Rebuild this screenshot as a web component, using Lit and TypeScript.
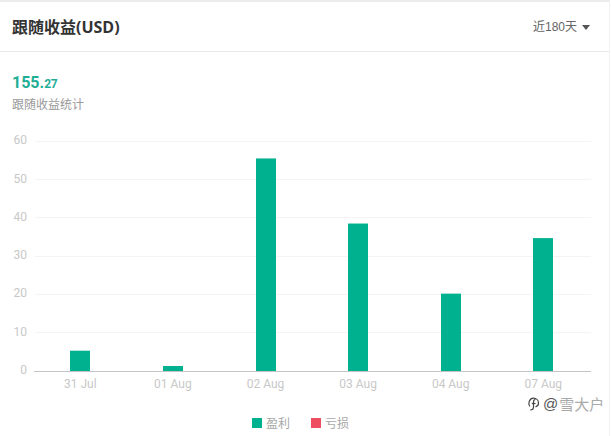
import { LitElement, html, css, svg } from "lit";
import { customElement } from "lit/decorators.js";

const Y0 = 371;
const STEP = 38.3;
const X0 = 34;
const BAND = 92.6;
const data = [
  { label: "31 Jul", v: 5.3 },
  { label: "01 Aug", v: 1.3 },
  { label: "02 Aug", v: 55.5 },
  { label: "03 Aug", v: 38.5 },
  { label: "04 Aug", v: 20.2 },
  { label: "07 Aug", v: 34.7 },
];

@customElement("app-root")
export class AppRoot extends LitElement {
  static styles = css`
    :host {
      display: block;
      width: 611px;
      height: 436px;
      background: #fff;
      overflow: hidden;
      position: relative;
      font-family: "Noto Sans CJK SC", "Noto Sans", sans-serif;
    }
    .card {
      box-sizing: border-box;
      height: 436px;
      margin-right: 1px;
      border-top: 2px solid #ececec;
      border-right: 1px solid #f2f2f2;
      display: flex;
      flex-direction: column;
    }
    .head {
      box-sizing: border-box;
      height: 50px;
      flex: none;
      border-bottom: 1px solid #e8e8e8;
      display: flex;
      align-items: center;
      justify-content: space-between;
      padding: 0 19px 0 12px;
    }
    .title {
      font-family: "Open Sans", "Noto Sans CJK SC", sans-serif;
      font-size: 16px;
      font-weight: 700;
      color: #333;
      line-height: 22px;
    }
    .range {
      display: flex;
      align-items: center;
      gap: 5px;
      font-family: "Liberation Sans", "Noto Sans CJK SC", sans-serif;
      font-size: 12px;
      line-height: 18px;
      color: #666;
      margin-top: 1px;
    }
    .caret {
      width: 0;
      height: 0;
      border-left: 4px solid transparent;
      border-right: 4px solid transparent;
      border-top: 5px solid #555;
    }
    .stat {
      padding: 22px 12px 0;
    }
    .num {
      font-family: Roboto, sans-serif;
      font-weight: 700;
      font-size: 16px;
      line-height: 18px;
      color: #1fae94;
    }
    .num small {
      font-size: 12px;
      letter-spacing: -0.4px;
    }
    .sub {
      font-size: 12px;
      line-height: 17px;
      color: #999;
      margin-top: 2px;
    }
    svg.chart {
      display: block;
      margin-top: 2px;
      flex: none;
    }
    .tick {
      font-family: Roboto, sans-serif;
      font-size: 12px;
      fill: #c8c8c8;
    }
    .legend {
      margin-top: 10px;
      padding-left: 252px;
      display: flex;
      gap: 21px;
      font-size: 12px;
      line-height: 18px;
      color: #a8a8a8;
    }
    .item {
      display: flex;
      align-items: center;
      gap: 4px;
    }
    .sw {
      width: 10px;
      height: 10px;
    }
    .sw.g {
      background: #00b18f;
    }
    .sw.r {
      background: #ed4f60;
    }
    .mark {
      position: absolute;
      left: 527px;
      top: 394px;
      display: flex;
      align-items: center;
      gap: 3px;
      font-size: 15px;
      line-height: 20px;
      color: #aaa;
    }
    .mark svg {
      display: block;
    }
    .at {
      color: #555;
      font-family: "Liberation Sans", sans-serif;
      font-size: 15px;
      margin-right: -2px;
    }
  `;

  render() {
    return html`
      <div class="card">
        <div class="head">
          <div class="title">跟随收益(USD)</div>
          <div class="range">近180天<span class="caret"></span></div>
        </div>
        <div class="stat">
          <div class="num">155.<small>27</small></div>
          <div class="sub">跟随收益统计</div>
        </div>
        <svg class="chart" width="609" height="290" viewBox="0 114 609 290">
          ${[1, 2, 3, 4, 5, 6].map((i) => {
            const y = Math.floor(Y0 - i * STEP) + 0.5;
            return svg`<line x1="35" x2="591" y1=${y} y2=${y} stroke="#f4f4f4"></line>`;
          })}
          ${[0, 1, 2, 3, 4, 5, 6].map(
            (i) =>
              svg`<text class="tick" x="27" y=${Y0 - i * STEP + 3} text-anchor="end">${i * 10}</text>`
          )}
          ${data.map((d, i) => {
            const cx = X0 + BAND * (i + 0.5);
            const h = d.v * (STEP / 10);
            return svg`
              <rect x=${Math.round(cx - 10)} y=${Y0 - h} width="20" height=${h} fill="#00b18f"></rect>
              <text class="tick" x=${cx} y="388" text-anchor="middle">${d.label}</text>`;
          })}
          <line x1="34" x2="591" y1="371.5" y2="371.5" stroke="#c4c4c4"></line>
        </svg>
        <div class="legend">
          <div class="item"><span class="sw g"></span>盈利</div>
          <div class="item"><span class="sw r"></span>亏损</div>
        </div>
      </div>
      <div class="mark">
        <svg width="13" height="16" viewBox="0 0 13 16" fill="none" stroke="#444" stroke-width="1.2">
          <path d="M2.800 10.500C0.500 7.500 2.500 2.200 6.500 2.200c3 0 5 2.300 5 4.800s-1.500 3.500-3 3.800"></path>
          <path d="M8.500 3.500C6.800 3.500 6.500 4.800 6.500 6v5c0 2-1.300 3-3.300 3"></path>
          <path d="M4.800 7.500h3.700"></path>
        </svg>
        <span class="at">@</span><span>雪大户</span>
      </div>
    `;
  }
}
